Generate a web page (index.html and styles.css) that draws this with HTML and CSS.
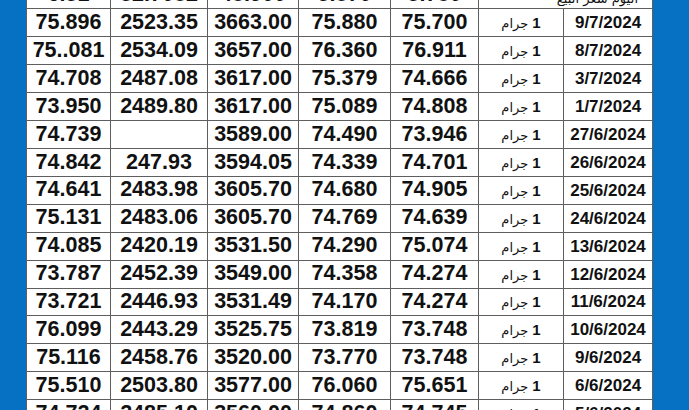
FILE: index.html
```html
<!DOCTYPE html>
<html lang="ar">
<head>
<meta charset="utf-8">
<link rel="stylesheet" href="styles.css">
</head>
<body>
<div class="frame">
<table class="prices" dir="rtl">
<colgroup>
<col class="c-date"><col class="c-wt"><col class="c-5"><col class="c-4"><col class="c-3"><col class="c-2"><col class="c-1">
</colgroup>
<tbody>
<tr class="head"><td colspan="2" class="label">اليوم سعر البيع</td><td>5.780</td><td>5.870</td><td>48.900</td><td>52.7082</td><td>6.51</td></tr>
<tr><td class="date">9/7/2024</td><td class="wt"><b>1</b> جرام</td><td>75.700</td><td>75.880</td><td>3663.00</td><td>2523.35</td><td>75.896</td></tr>
<tr><td class="date">8/7/2024</td><td class="wt"><b>1</b> جرام</td><td>76.911</td><td>76.360</td><td>3657.00</td><td>2534.09</td><td>75..081</td></tr>
<tr><td class="date">3/7/2024</td><td class="wt"><b>1</b> جرام</td><td>74.666</td><td>75.379</td><td>3617.00</td><td>2487.08</td><td>74.708</td></tr>
<tr><td class="date">1/7/2024</td><td class="wt"><b>1</b> جرام</td><td>74.808</td><td>75.089</td><td>3617.00</td><td>2489.80</td><td>73.950</td></tr>
<tr><td class="date">27/6/2024</td><td class="wt"><b>1</b> جرام</td><td>73.946</td><td>74.490</td><td>3589.00</td><td></td><td>74.739</td></tr>
<tr><td class="date">26/6/2024</td><td class="wt"><b>1</b> جرام</td><td>74.701</td><td>74.339</td><td>3594.05</td><td>247.93</td><td>74.842</td></tr>
<tr><td class="date">25/6/2024</td><td class="wt"><b>1</b> جرام</td><td>74.905</td><td>74.680</td><td>3605.70</td><td>2483.98</td><td>74.641</td></tr>
<tr><td class="date">24/6/2024</td><td class="wt"><b>1</b> جرام</td><td>74.639</td><td>74.769</td><td>3605.70</td><td>2483.06</td><td>75.131</td></tr>
<tr><td class="date">13/6/2024</td><td class="wt"><b>1</b> جرام</td><td>75.074</td><td>74.290</td><td>3531.50</td><td>2420.19</td><td>74.085</td></tr>
<tr><td class="date">12/6/2024</td><td class="wt"><b>1</b> جرام</td><td>74.274</td><td>74.358</td><td>3549.00</td><td>2452.39</td><td>73.787</td></tr>
<tr><td class="date">11/6/2024</td><td class="wt"><b>1</b> جرام</td><td>74.274</td><td>74.170</td><td>3531.49</td><td>2446.93</td><td>73.721</td></tr>
<tr><td class="date">10/6/2024</td><td class="wt"><b>1</b> جرام</td><td>73.748</td><td>73.819</td><td>3525.75</td><td>2443.29</td><td>76.099</td></tr>
<tr><td class="date">9/6/2024</td><td class="wt"><b>1</b> جرام</td><td>73.748</td><td>73.770</td><td>3520.00</td><td>2458.76</td><td>75.116</td></tr>
<tr><td class="date">6/6/2024</td><td class="wt"><b>1</b> جرام</td><td>75.651</td><td>76.060</td><td>3577.00</td><td>2503.80</td><td>75.510</td></tr>
<tr><td class="date">5/6/2024</td><td class="wt"><b>1</b> جرام</td><td>74.745</td><td>74.860</td><td>3560.00</td><td>2485.10</td><td>74.724</td></tr>
</tbody>
</table>
</div>
</body>
</html>
```
FILE: styles.css
```css
html, body {
  margin: 0;
  padding: 0;
  width: 689px;
  height: 410px;
  overflow: hidden;
  background: #0670c2;
}
.frame {
  padding-left: 26px;
  margin-top: -19.8px;
}
.prices {
  table-layout: fixed;
  border-collapse: collapse;
  width: 626px;
  background: #ffffff;
  font-family: "Liberation Sans", Arial, "DejaVu Sans", sans-serif;
  font-weight: bold;
  color: #111111;
}
.c-date { width: 89px; }
.c-wt { width: 85px; }
.c-5 { width: 88px; }
.c-4 { width: 92px; }
.c-3 { width: 91px; }
.c-2 { width: 97px; }
.c-1 { width: 84px; }
.prices tr { height: 27.95px; }
.prices td {
  border: 1.6px solid #5e5e5e;
  padding: 0;
  text-align: center;
  vertical-align: middle;
  font-size: 21.5px;
  line-height: 1;
  white-space: nowrap;
  overflow: hidden;
  direction: ltr;
  unicode-bidi: isolate;
}
.prices td.date {
  font-size: 17px;
}
.prices td.wt {
  direction: rtl;
  font-family: "DejaVu Sans", "Liberation Sans", sans-serif;
  font-weight: normal;
  font-size: 13px;
}
.prices td.wt b {
  font-family: "Liberation Sans", Arial, sans-serif;
  font-weight: bold;
  font-size: 15px;
}
.prices td.label {
  direction: rtl;
  font-family: "DejaVu Sans", sans-serif;
  font-weight: normal;
  font-size: 13px;
  text-align: right;
  padding-right: 14px;
  vertical-align: bottom;
  padding-bottom: 3px;
}
```
